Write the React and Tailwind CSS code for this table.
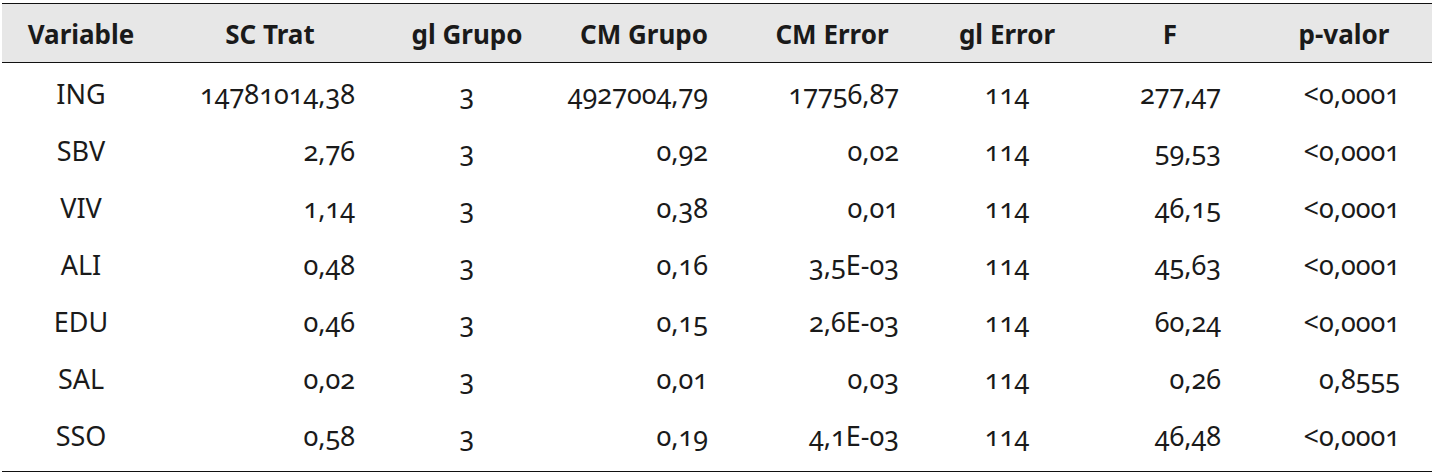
import React from 'react';

const cols = [
  { label: 'Variable', w: 'w-[158px]', cell: 'text-center' },
  { label: 'SC Trat', w: 'w-[220px]', cell: 'text-right pr-[25px]' },
  { label: 'gl Grupo', w: 'w-[174px]', cell: 'text-center' },
  { label: 'CM Grupo', w: 'w-[180px]', cell: 'text-right pr-[26px]' },
  { label: 'CM Error', w: 'w-[196px]', cell: 'text-right pr-[31px]' },
  { label: 'gl Error', w: 'w-[154px]', cell: 'text-center' },
  { label: 'F', w: 'w-[172px]', cell: 'text-right pr-[35px]' },
  { label: 'p-valor', w: 'w-[176px]', cell: 'text-right pr-[32px]' },
];

const rows = [
  ['ING', '14781014,38', '3', '4927004,79', '17756,87', '114', '277,47', '<0,0001'],
  ['SBV', '2,76', '3', '0,92', '0,02', '114', '59,53', '<0,0001'],
  ['VIV', '1,14', '3', '0,38', '0,01', '114', '46,15', '<0,0001'],
  ['ALI', '0,48', '3', '0,16', '3,5E-03', '114', '45,63', '<0,0001'],
  ['EDU', '0,46', '3', '0,15', '2,6E-03', '114', '60,24', '<0,0001'],
  ['SAL', '0,02', '3', '0,01', '0,03', '114', '0,26', '0,8555'],
  ['SSO', '0,58', '3', '0,19', '4,1E-03', '114', '46,48', '<0,0001'],
];

export default function App() {
  return (
    <div className="w-[1439px] h-[475px] bg-white pt-[3px] pl-[2px] font-['Noto_Sans',sans-serif] text-[#1a1a1a] oldstyle-nums">
      <div className="w-[1430px] border-t border-b border-[#111]">
        {/* header */}
        <div className="flex h-[59px] items-center pt-[1px] bg-[#e7e7e7] border-b border-[#111] text-[26px] font-bold leading-none">
          {cols.map(c => (
            <div key={c.label} className={`${c.w} text-center`}>{c.label}</div>
          ))}
        </div>

        {/* body */}
        <div className="pt-[2px] pb-[7px] text-[27px] leading-none">
          {rows.map(r => (
            <div key={r[0]} className="flex h-[57px] items-center">
              {r.map((v, i) => (
                <div key={i} className={`${cols[i].w} ${cols[i].cell}`}>{v}</div>
              ))}
            </div>
          ))}
        </div>
      </div>
    </div>
  );
}
